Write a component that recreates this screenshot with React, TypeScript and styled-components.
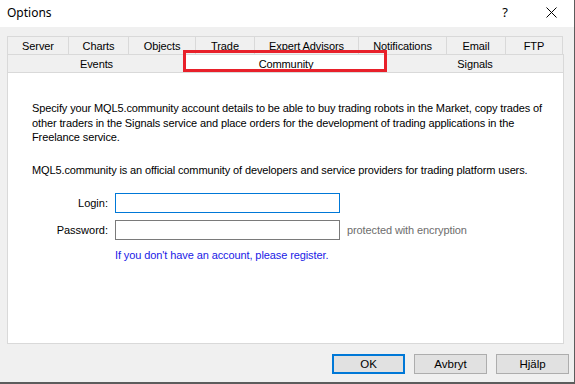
import React from 'react';
import styled, { createGlobalStyle } from 'styled-components';

const GlobalStyle = createGlobalStyle`
  html, body {
    margin: 0;
    padding: 0;
    background: #f0f0f0;
  }
  * {
    box-sizing: border-box;
  }
`;

// whole dialog window, dark edge on right/bottom like the screenshot
const Window = styled.div`
  width: 575px;
  height: 384px;
  display: flex;
  flex-direction: column;
  background: #f0f0f0;
  border-right: 1px solid #5c5c5c;
  border-bottom: 2px solid #5c5c5c;
  font-family: 'Liberation Sans', Arial, sans-serif;
  font-size: 11px;
  color: #000;
  overflow: hidden;
`;

const TitleBar = styled.div`
  height: 27px;
  flex-shrink: 0;
  background: #fff;
  display: flex;
  align-items: center;
  padding-left: 7px;
`;

const Title = styled.div`
  flex: 1;
  font-family: 'Noto Sans', 'Open Sans', sans-serif;
  font-size: 12px;
  padding-bottom: 3px;
`;

const TitleButton = styled.div`
  width: 46px;
  height: 27px;
  display: flex;
  align-items: center;
  justify-content: center;
  font-family: 'Noto Sans', sans-serif;
  font-size: 13px;
  padding-bottom: 3px;
`;

const Body = styled.div`
  flex: 1;
  display: flex;
  flex-direction: column;
  padding: 9px 5px 9px 7px;
`;

const TabsWrap = styled.div`
  position: relative;
`;

const TabRow = styled.div`
  display: flex;
  height: 18px;
  width: 556px;
`;

const Tab = styled.div<{ $w: number; $active?: boolean }>`
  width: ${({ $w }) => $w}px;
  flex-shrink: 0;
  display: flex;
  align-items: center;
  justify-content: center;
  background: ${({ $active }) => ($active ? '#fff' : '#f0f0f0')};
  border: 1px solid #d9d9d9;
  border-bottom: none;
  margin-left: -1px;
  &:first-child {
    margin-left: 0;
  }
  font-size: 11px;
  letter-spacing: -0.1px;
  padding-top: 1px;
`;

// red annotation rectangle drawn over the selected tab
const Highlight = styled.div`
  position: absolute;
  left: 176px;
  top: 14px;
  width: 204px;
  height: 22px;
  border: 3px solid #e8202a;
  pointer-events: none;
`;

const Panel = styled.div`
  width: 557px;
  height: 272px;
  background: #fff;
  border: 1px solid #d9d9d9;
  padding: 28px 12px 0 24px;
`;

const Para = styled.p<{ $gap: number }>`
  margin: 0 0 ${({ $gap }) => $gap}px 0;
  line-height: 14.5px;
  font-size: 11px;
  letter-spacing: -0.12px;
`;

const Form = styled.div`
  display: grid;
  grid-template-columns: 76px 225px auto;
  column-gap: 7px;
  row-gap: 7px;
  align-items: center;
`;

const Label = styled.label`
  text-align: right;
`;

const Input = styled.div<{ $focus?: boolean }>`
  height: 20px;
  border: 1px solid ${({ $focus }) => ($focus ? '#0078d7' : '#7a7a7a')};
  background: #fff;
`;

const Hint = styled.span`
  color: #6d6d6d;
  letter-spacing: -0.1px;
`;

const RegisterLink = styled.a`
  grid-column: 2 / 4;
  color: #1a1ae6;
  text-decoration: none;
  letter-spacing: -0.1px;
  margin-top: 2px;
`;

const Footer = styled.div`
  display: flex;
  justify-content: flex-end;
  gap: 9px;
  margin-top: 10px;
`;

const Button = styled.button<{ $default?: boolean }>`
  width: 73px;
  height: 20px;
  background: #e1e1e1;
  border: ${({ $default }) => ($default ? '2px solid #0078d7' : '1px solid #adadad')};
  font-family: 'Liberation Sans', Arial, sans-serif;
  font-size: 11.5px;
  color: #000;
  padding: 0;
`;

const rowOne = [
  { label: 'Server', w: 62 },
  { label: 'Charts', w: 61 },
  { label: 'Objects', w: 68 },
  { label: 'Trade', w: 60 },
  { label: 'Expert Advisors', w: 105 },
  { label: 'Notifications', w: 89 },
  { label: 'Email', w: 60 },
  { label: 'FTP', w: 58 },
];

const rowTwo = [
  { label: 'Events', w: 179 },
  { label: 'Community', w: 202, active: true },
  { label: 'Signals', w: 178 },
];

const CloseIcon = () => (
  <svg width="11" height="11" viewBox="0 0 11 11">
    <path d="M0.5 0.5 L10.5 10.5 M10.5 0.5 L0.5 10.5" stroke="#000" strokeWidth="1" />
  </svg>
);

export default function App() {
  return (
    <Window>
      <GlobalStyle />
      <TitleBar>
        <Title>Options</Title>
        <TitleButton>?</TitleButton>
        <TitleButton>
          <CloseIcon />
        </TitleButton>
      </TitleBar>
      <Body>
        <TabsWrap>
          <TabRow>
            {rowOne.map((t) => (
              <Tab key={t.label} $w={t.w}>
                {t.label}
              </Tab>
            ))}
          </TabRow>
          <TabRow>
            {rowTwo.map((t) => (
              <Tab key={t.label} $w={t.w} $active={t.active}>
                {t.label}
              </Tab>
            ))}
          </TabRow>
          <Highlight />
        </TabsWrap>
        <Panel>
          <Para $gap={18}>
            Specify your MQL5.community account details to be able to buy trading robots in the Market, copy trades of
            other traders in the Signals service and place orders for the development of trading applications in the
            Freelance service.
          </Para>
          <Para $gap={16}>
            MQL5.community is an official community of developers and service providers for trading platform users.
          </Para>
          <Form>
            <Label>Login:</Label>
            <Input $focus />
            <span />
            <Label>Password:</Label>
            <Input />
            <Hint>protected with encryption</Hint>
            <span />
            <RegisterLink>If you don't have an account, please register.</RegisterLink>
          </Form>
        </Panel>
        <Footer>
          <Button $default>OK</Button>
          <Button>Avbryt</Button>
          <Button>Hjälp</Button>
        </Footer>
      </Body>
    </Window>
  );
}
